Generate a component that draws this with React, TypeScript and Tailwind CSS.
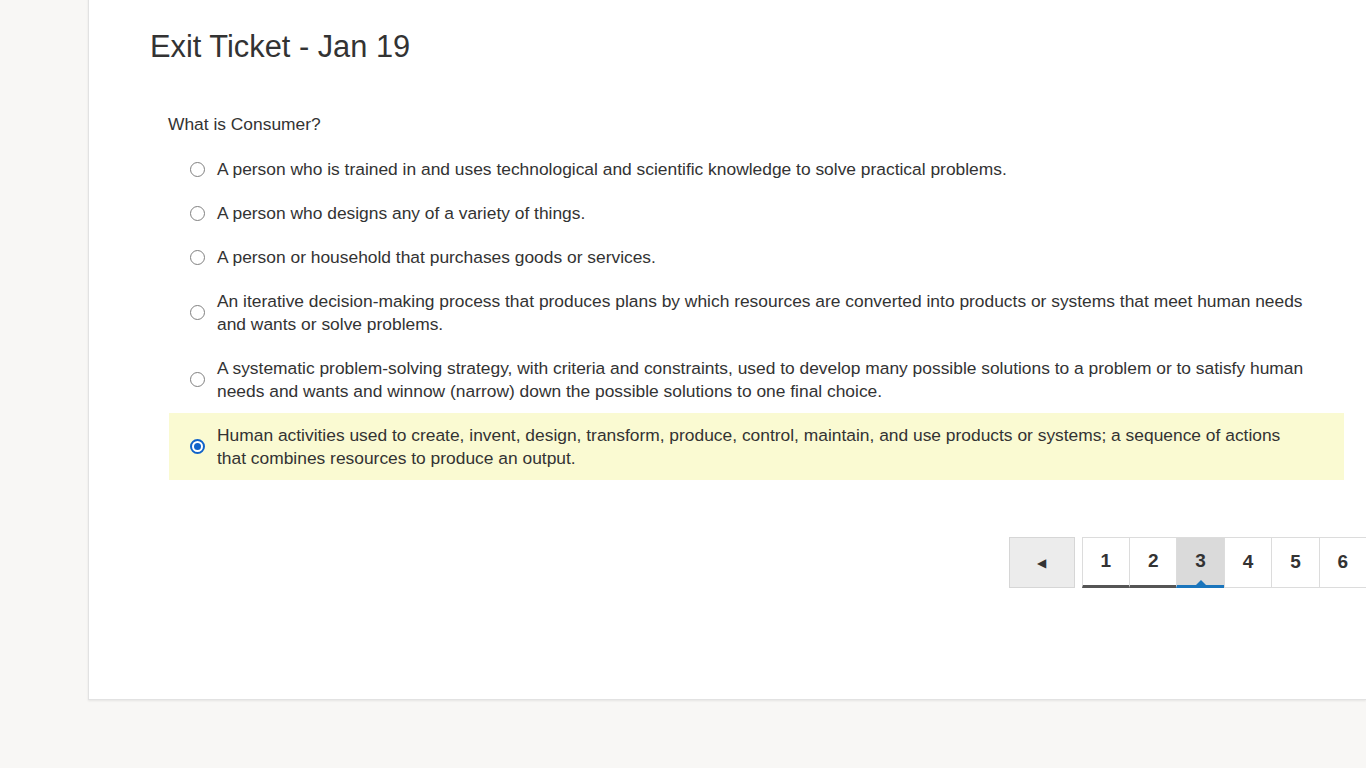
import { useState } from "react";

const options = [
    "A person who is trained in and uses technological and scientific knowledge to solve practical problems.",
    "A person who designs any of a variety of things.",
    "A person or household that purchases goods or services.",
    "An iterative decision-making process that produces plans by which resources are converted into products or systems that meet human needs and wants or solve problems.",
    "A systematic problem-solving strategy, with criteria and constraints, used to develop many possible solutions to a problem or to satisfy human needs and wants and winnow (narrow) down the possible solutions to one final choice.",
    "Human activities used to create, invent, design, transform, produce, control, maintain, and use products or systems; a sequence of actions that combines resources to produce an output.",
];

const pages = [1, 2, 3, 4, 5, 6];

function Radio({ checked }: { checked: boolean }) {
    return checked ? (
        <span className="flex h-[15px] w-[15px] shrink-0 items-center justify-center rounded-full border-2 border-[#1062c9] bg-white">
            <span className="h-[7px] w-[7px] rounded-full bg-[#1062c9]" />
        </span>
    ) : (
        <span className="h-[15px] w-[15px] shrink-0 rounded-full border border-[#808080] bg-white" />
    );
}

export default function App() {
    const [selected, setSelected] = useState(5);
    const current = 3;

    return (
        <div
            className="h-[768px] w-[1366px] overflow-hidden bg-[#f8f7f5] text-[#333]"
            style={{ fontFamily: '"Liberation Sans", Arial, sans-serif' }}
        >
            <div className="ml-[88px] mt-[-10px] h-[710px] border-b border-l border-[#e2e2e2] bg-white shadow-[0_1px_2px_rgba(0,0,0,0.08)]">
                <h1 className="pl-[61px] pt-[38px] text-[30.8px] leading-[38px] text-[#333]">
                    Exit Ticket - Jan 19
                </h1>

                <div className="mt-[47px] pl-[80px] pr-[22px]">
                    <p className="-ml-px text-[17.4px] leading-[23px]">What is Consumer?</p>
                    <div className="mt-[11px]">
                        {options.map((text, i) => (
                            <label
                                key={i}
                                onClick={() => setSelected(i)}
                                className={`flex cursor-pointer items-center py-[10.5px] pl-[21px] pr-[30px] ${selected === i ? "bg-[#fafad2]" : ""}`}
                            >
                                <Radio checked={selected === i} />
                                <span className="ml-[12px] text-[17.4px] leading-[23px] text-[#333]">
                                    {text}
                                </span>
                            </label>
                        ))}
                    </div>
                </div>

                <div className="mt-[57px] flex justify-end">
                    <button
                        type="button"
                        className="flex h-[51px] w-[66px] items-center justify-center border border-[#d6d6d6] bg-[#ececec] text-[12px] text-[#333]"
                    >
                        ◀
                    </button>
                    <div className="ml-[7px] flex">
                        {pages.map((p) => {
                            const done = p < current;
                            const active = p === current;
                            return (
                                <button
                                    key={p}
                                    type="button"
                                    className={`relative flex h-[51px] w-[47.4px] items-center justify-center border-l border-t border-[#dcdcdc] text-[19px] font-bold text-[#333] ${active ? "bg-[#dadada]" : "bg-white"} ${done ? "border-b-[3px] border-b-[#555]" : active ? "border-b-[3px] border-b-[#1a75bc]" : "border-b border-b-[#dcdcdc]"}`}
                                >
                                    {p}
                                    {active && (
                                        <span className="absolute bottom-0 left-1/2 h-0 w-0 -translate-x-1/2 border-x-[5px] border-b-[5px] border-x-transparent border-b-[#1a75bc]" />
                                    )}
                                </button>
                            );
                        })}
                    </div>
                </div>
            </div>
        </div>
    );
}
